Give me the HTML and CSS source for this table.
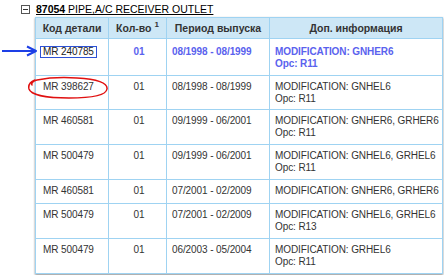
FILE: index.html
```html
<!DOCTYPE html>
<html>
<head>
<meta charset="utf-8">
<link rel="stylesheet" href="styles.css">
</head>
<body>
<div class="page">
  <div class="title">
    <svg class="toggle" width="9" height="9" viewBox="0 0 9 9"><rect x="0.5" y="0.5" width="8" height="8" fill="#fff" stroke="#555"/><line x1="2" y1="4.5" x2="7" y2="4.5" stroke="#333"/></svg>
    <a class="title-link"><b>87054</b> PIPE,A/C RECEIVER OUTLET</a>
  </div>
  <table class="parts">
    <colgroup><col class="c1"><col class="c2"><col class="c3"><col class="c4"></colgroup>
    <thead>
      <tr class="head"><th>Код детали</th><th>Кол-во <sup>1</sup></th><th>Период выпуска</th><th>Доп. информация</th></tr>
    </thead>
    <tbody>
      <tr class="hl first"><td class="code"><span class="boxed">MR 240785</span></td><td class="qty">01</td><td>08/1998 - 08/1999</td><td>MODIFICATION: GNHER6<br>Opc: R11</td></tr>
      <tr class="dbl short"><td class="code">MR 398627</td><td class="qty">01</td><td>08/1998 - 08/1999</td><td>MODIFICATION: GNHEL6<br>Opc: R11</td></tr>
      <tr class="dbl"><td class="code">MR 460581</td><td class="qty">01</td><td>09/1999 - 06/2001</td><td>MODIFICATION: GNHER6, GRHER6<br>Opc: R11</td></tr>
      <tr class="dbl"><td class="code">MR 500479</td><td class="qty">01</td><td>09/1999 - 06/2001</td><td>MODIFICATION: GNHEL6, GRHEL6<br>Opc: R11</td></tr>
      <tr class="single"><td class="code">MR 460581</td><td class="qty">01</td><td>07/2001 - 02/2009</td><td>MODIFICATION: GNHER6, GRHER6</td></tr>
      <tr class="dbl"><td class="code">MR 500479</td><td class="qty">01</td><td>07/2001 - 02/2009</td><td>MODIFICATION: GNHEL6, GRHEL6<br>Opc: R13</td></tr>
      <tr class="dbl"><td class="code">MR 500479</td><td class="qty">01</td><td>06/2003 - 05/2004</td><td>MODIFICATION: GRHEL6<br>Opc: R11</td></tr>
    </tbody>
  </table>
  <svg class="arrow" width="40" height="12" viewBox="0 0 40 12"><line x1="2" y1="6" x2="34" y2="6" stroke="#1d3fe6" stroke-width="2"/><path d="M27 1.5 L36 6 L27 10.5" fill="none" stroke="#1d3fe6" stroke-width="2" stroke-linejoin="round"/></svg>
  <svg class="ellipse" width="84" height="24" viewBox="0 0 84 24"><path d="M8 4 C3 6 1 9 2 13 C4 19 20 22 42 22 C62 22 79 20 80 13 C81 7 70 3 50 2 C35 1 20 2 10 4 C6 5 4 7 5 9" fill="none" stroke="#e01010" stroke-width="1.5" stroke-linecap="round"/></svg>
</div>
</body>
</html>
```
FILE: styles.css
```css
html, body { margin: 0; padding: 0; background: #fff; }
body { font-family: "Liberation Sans", Arial, sans-serif; color: #333; }
.page { position: relative; width: 444px; height: 275px; overflow: hidden; }
.title { display: flex; align-items: center; gap: 6px; padding: 3px 0 0 21px; height: 12px; }
.toggle { display: block; }
.title-link { font-size: 10.5px; color: #000; text-decoration: underline; line-height: 12px; }
.title-link b { font-weight: bold; }
.parts { border-collapse: collapse; margin: 2px 0 0 35px; width: 407px; table-layout: fixed; font-size: 10px; line-height: 12px; letter-spacing: -0.1px; box-shadow: 0 1px 2px rgba(0,0,0,0.45); }
.c1 { width: 73px; } .c2 { width: 58px; } .c3 { width: 103px; } .c4 { width: 173px; }
.parts th, .parts td { border: 1px solid #9fd3f2; white-space: nowrap; overflow: hidden; }
.parts tr.head { height: 21px; }
.parts tr.first { height: 37px; }
.parts tr.dbl { height: 35px; }
.parts tr.short { height: 34px; }
.parts tr.single { height: 24px; }
.parts th { background: #cde7f6; font-weight: bold; color: #333; font-size: 10.5px; letter-spacing: 0; padding: 0; text-align: center; vertical-align: middle; }
.parts th sup { font-size: 8px; line-height: 0; vertical-align: 5px; }
.parts td { padding: 5px 2px 0 5px; vertical-align: top; text-align: left; }
.parts td.code { padding-left: 7px; }
.parts td.qty { text-align: center; }
.parts tr.hl td { color: #5a62ee; font-weight: bold; padding-top: 7px; }
.parts tr.hl td.code { color: #222; font-weight: normal; }
.boxed { display: inline-block; border: 1px solid #2e52d6; padding: 0 2px; margin-left: -3px; line-height: 10px; }
.arrow { position: absolute; left: 0; top: 45px; }
.ellipse { position: absolute; left: 27px; top: 76px; }
```
